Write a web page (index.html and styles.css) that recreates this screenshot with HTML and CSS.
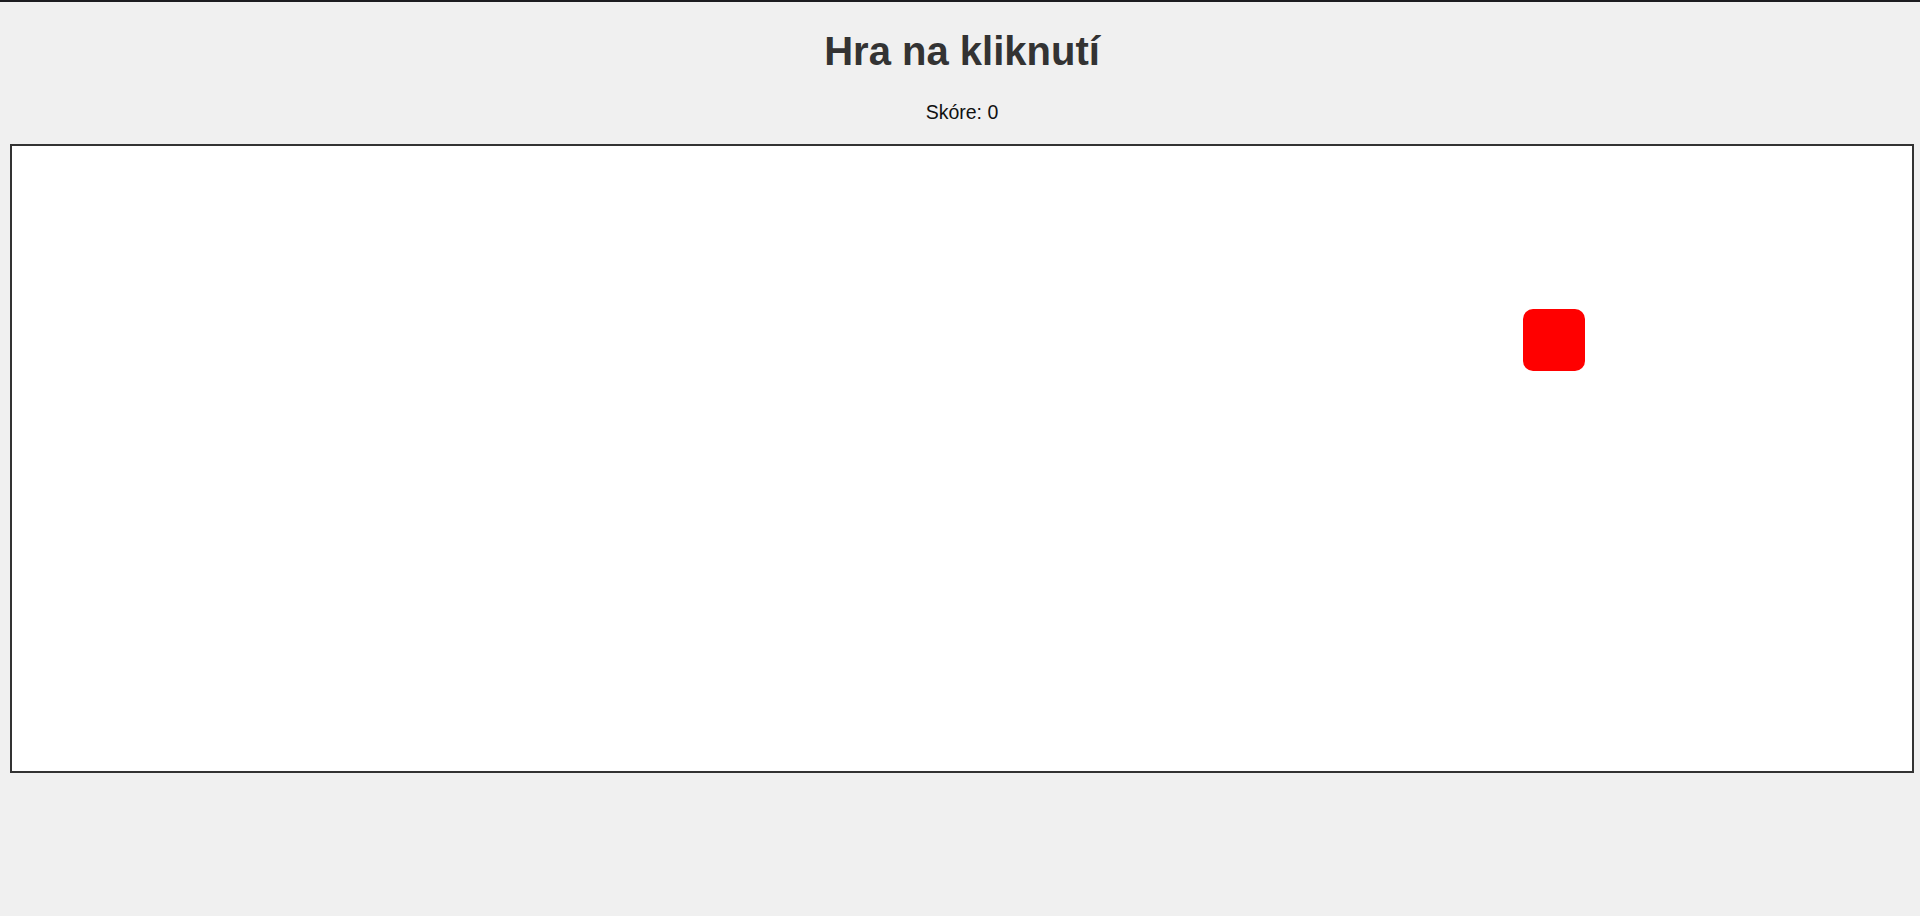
FILE: index.html
```html
<!DOCTYPE html>
<html lang="cs">
<head>
<meta charset="utf-8">
<title>Hra na kliknutí</title>
<link rel="stylesheet" href="styles.css">
</head>
<body>
<h1 class="title">Hra na kliknutí</h1>
<p class="score">Skóre: <span id="score">0</span></p>
<div class="game-area">
  <div class="target" style="left: 1511px; top: 163px;"></div>
</div>
</body>
</html>
```
FILE: styles.css
```css
html, body {
  margin: 0;
  padding: 0;
}
body {
  background: #f0f0f0;
  border-top: 2px solid #1c1c20;
  padding: 0 6px 0 10px;
  font-family: "Liberation Sans", Arial, sans-serif;
  height: 914px;
  overflow: hidden;
}
.title {
  margin: 26px 0 0;
  font-size: 40px;
  line-height: 46px;
  font-weight: bold;
  color: #333;
  text-align: center;
}
.score {
  margin: 27px 0 0;
  font-size: 19.5px;
  line-height: 23px;
  color: #111;
  text-align: center;
}
.game-area {
  position: relative;
  margin-top: 20px;
  width: 1900px;
  height: 625px;
  background: #fff;
  border: 2px solid #333;
}
.target {
  position: absolute;
  width: 62px;
  height: 62px;
  background: #ff0000;
  border-radius: 10px;
}
```
